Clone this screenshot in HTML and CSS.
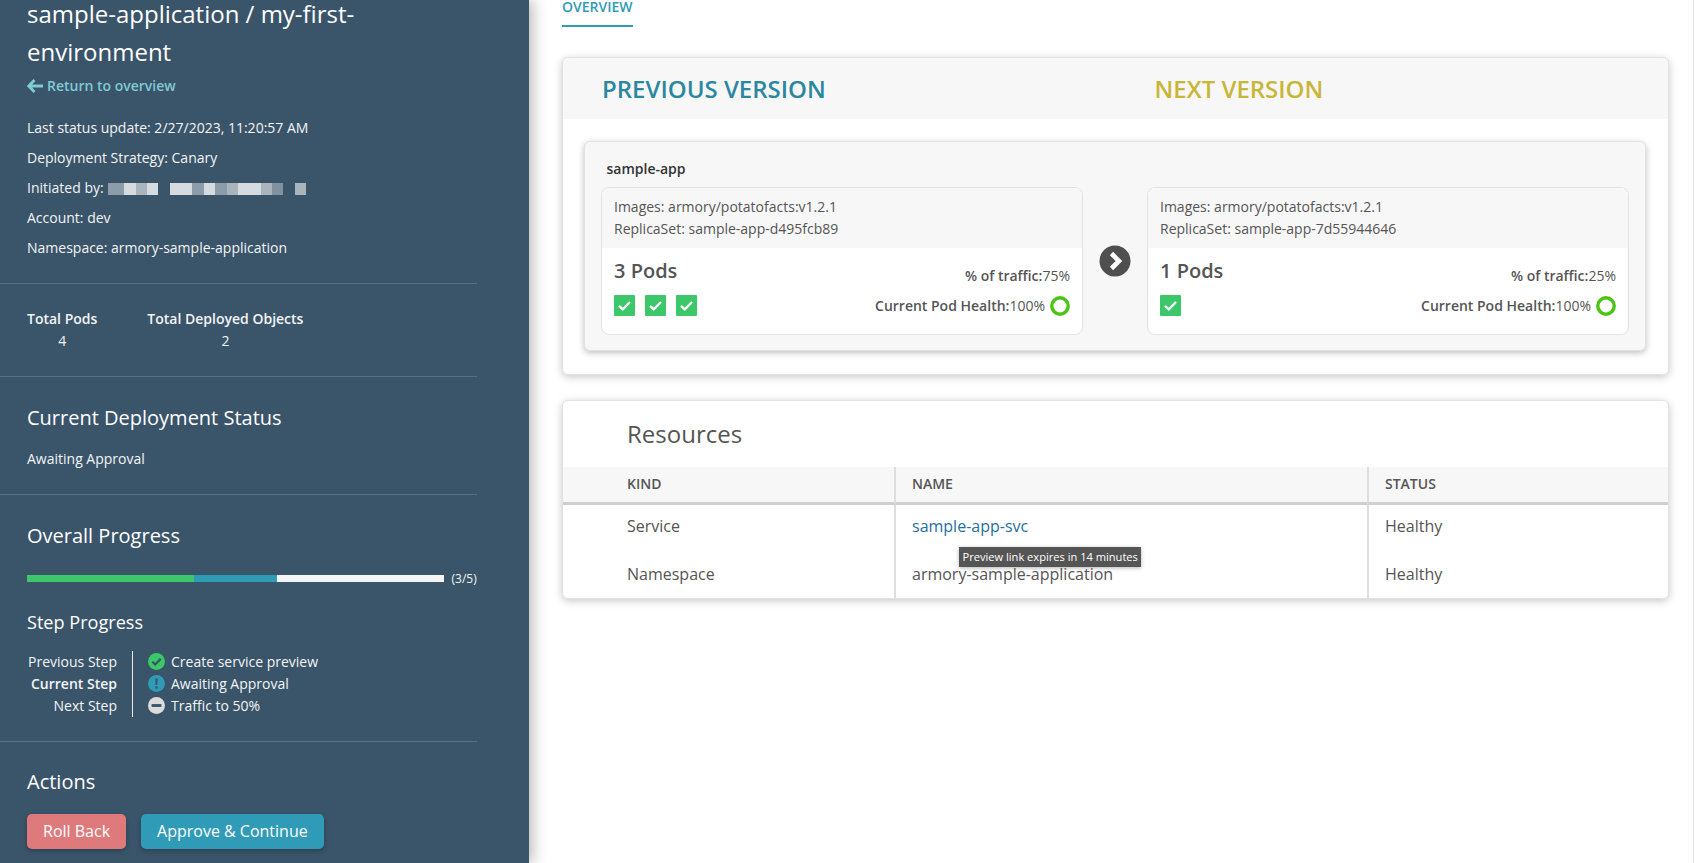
FILE: index.html
```html
<!DOCTYPE html>
<html lang="en">
<head>
<meta charset="utf-8">
<title>sample-application / my-first-environment</title>
<link rel="stylesheet" href="styles.css">
</head>
<body>
<div class="page">
  <aside class="sidebar">
    <section class="sec sec-head">
      <h1 class="title"><span class="title-line">sample-application / my-first-</span><span class="title-line">environment</span></h1>
      <a class="back"><svg class="back-ico" viewBox="0 0 16 14"><path d="M7.500 1 1.800 7 7.500 13M2 7h14" fill="none" stroke="#7fcbd3" stroke-width="2.800"/></svg>Return to overview</a>
      <div class="meta first">Last status update: 2/27/2023, 11:20:57 AM</div>
      <div class="meta">Deployment Strategy: Canary</div>
      <div class="meta init">Initiated by: <span class="pix"><i class="b2 w"></i><i class="b4"></i><i class="b3"></i><i class="b4"></i><i class="gap"></i><i class="b4 w2"></i><i class="b2"></i><i class="b4"></i><i class="b2"></i><i class="b3"></i><i class="b4"></i><i class="b4"></i><i class="b3"></i><i class="b1"></i><i class="gap"></i><i class="b3"></i></span></div>
      <div class="meta">Account: dev</div>
      <div class="meta">Namespace: armory-sample-application</div>
    </section>
    <section class="sec sec-totals">
      <div class="total"><div class="total-k">Total Pods</div><div class="total-v">4</div></div>
      <div class="total"><div class="total-k">Total Deployed Objects</div><div class="total-v">2</div></div>
    </section>
    <section class="sec sec-status">
      <h2 class="h2">Current Deployment Status</h2>
      <div class="status-text">Awaiting Approval</div>
    </section>
    <section class="sec sec-progress">
      <h2 class="h2">Overall Progress</h2>
      <div class="bar-row">
        <div class="bar"><div class="bar-g"></div><div class="bar-b"></div></div>
        <span class="bar-label">(3/5)</span>
      </div>
      <h3 class="h3">Step Progress</h3>
      <div class="steps">
        <div class="step-labels">
          <div>Previous Step</div>
          <div class="cur">Current Step</div>
          <div>Next Step</div>
        </div>
        <div class="step-items">
          <div class="step"><svg class="step-ico" viewBox="0 0 18 18"><circle cx="9" cy="9" r="9" fill="#3cc76a"/><path d="M4.600 9.300 7.600 12.200 13.400 6.200" fill="none" stroke="#3a546a" stroke-width="2.400"/></svg>Create service preview</div>
          <div class="step"><svg class="step-ico" viewBox="0 0 18 18"><circle cx="9" cy="9" r="9" fill="#2f9bb7"/><path d="M7.800 3.600h2.400l-.3 7H8.100zM7.800 12h2.400v2.400H7.800z" fill="#3a546a"/></svg>Awaiting Approval</div>
          <div class="step"><svg class="step-ico" viewBox="0 0 18 18"><circle cx="9" cy="9" r="9" fill="#dcdcdc"/><rect x="3.800" y="7.500" width="10.400" height="3" fill="#3a546a"/></svg>Traffic to 50%</div>
        </div>
      </div>
    </section>
    <section class="sec sec-actions">
      <h2 class="h2">Actions</h2>
      <div class="btns">
        <button class="btn btn-red">Roll Back</button>
        <button class="btn btn-blue">Approve &amp; Continue</button>
      </div>
    </section>
  </aside>
  <main class="main">
    <div class="tabs"><span class="tab">OVERVIEW</span></div>
    <section class="card">
      <div class="card-head">
        <div class="ver ver-prev">PREVIOUS VERSION</div>
        <div class="ver ver-next">NEXT VERSION</div>
      </div>
      <div class="app">
        <div class="app-name">sample-app</div>
        <div class="pods">
          <div class="pod">
            <div class="pod-head">
              <div>Images: armory/potatofacts:v1.2.1</div>
              <div>ReplicaSet: sample-app-d495fcb89</div>
            </div>
            <div class="pod-body">
              <div class="pod-left">
                <div class="pod-count">3 Pods</div>
                <div class="checks">
                  <svg class="chk" viewBox="0 0 21 21"><rect width="21" height="21" rx="1" fill="#3cc76a"/><path d="M5 10.800 8.800 14.400 16 7" fill="none" stroke="#fff" stroke-width="2.300"/></svg>
                  <svg class="chk" viewBox="0 0 21 21"><rect width="21" height="21" rx="1" fill="#3cc76a"/><path d="M5 10.800 8.800 14.400 16 7" fill="none" stroke="#fff" stroke-width="2.300"/></svg>
                  <svg class="chk" viewBox="0 0 21 21"><rect width="21" height="21" rx="1" fill="#3cc76a"/><path d="M5 10.800 8.800 14.400 16 7" fill="none" stroke="#fff" stroke-width="2.300"/></svg>
                </div>
              </div>
              <div class="pod-right">
                <div class="traffic"><b>% of traffic:</b>75%</div>
                <div class="health"><b>Current Pod Health:</b>100%<svg class="ring" viewBox="0 0 20 20"><circle cx="10" cy="10" r="8.200" fill="none" stroke="#4cc414" stroke-width="3.400"/></svg></div>
              </div>
            </div>
          </div>
          <div class="arrow"><svg class="arrow-ico" viewBox="0 0 32 32"><circle cx="16" cy="16" r="15.500" fill="#4f4f4f"/><path d="M12.500 8.500 20 16 12.500 23.500" fill="none" stroke="#fff" stroke-width="4.600"/></svg></div>
          <div class="pod">
            <div class="pod-head">
              <div>Images: armory/potatofacts:v1.2.1</div>
              <div>ReplicaSet: sample-app-7d55944646</div>
            </div>
            <div class="pod-body">
              <div class="pod-left">
                <div class="pod-count">1 Pods</div>
                <div class="checks">
                  <svg class="chk" viewBox="0 0 21 21"><rect width="21" height="21" rx="1" fill="#3cc76a"/><path d="M5 10.800 8.800 14.400 16 7" fill="none" stroke="#fff" stroke-width="2.300"/></svg>
                </div>
              </div>
              <div class="pod-right">
                <div class="traffic"><b>% of traffic:</b>25%</div>
                <div class="health"><b>Current Pod Health:</b>100%<svg class="ring" viewBox="0 0 20 20"><circle cx="10" cy="10" r="8.200" fill="none" stroke="#4cc414" stroke-width="3.400"/></svg></div>
              </div>
            </div>
          </div>
        </div>
      </div>
    </section>
    <section class="card res">
      <h2 class="res-title">Resources</h2>
      <div class="table">
        <div class="th c1">KIND</div><div class="th c2">NAME</div><div class="th c3">STATUS</div>
        <div class="td r1 c1">Service</div><div class="td r1 c2"><a class="link">sample-app-svc</a></div><div class="td r1 c3">Healthy</div>
        <div class="td r2 c1">Namespace</div><div class="td r2 c2">armory-sample-application</div><div class="td r2 c3">Healthy</div>
      </div>
      <div class="tooltip">Preview link expires in 14 minutes</div>
    </section>
  </main>
</div>
</body>
</html>
```
FILE: styles.css
```css
* { box-sizing: border-box; }
html, body { margin: 0; height: 100%; overflow: hidden; background: #fff; }
body { font-family: "Open Sans", "Noto Sans", sans-serif; color: #555; }
.page { display: flex; height: 863px; overflow: hidden; }

.sidebar { width: 529px; flex: none; height: 863px; background: #3a546a; color: #f2f4f5; padding-right: 52px; box-shadow: 3px 0 14px rgba(0,0,0,.3); position: relative; z-index: 1; overflow: hidden; }
.sec { padding-left: 27px; border-bottom: 1px solid #58707f; }
.sec-head { padding-top: 1px; padding-bottom: 25px; }
.title { margin: 0; font-size: 24px; font-weight: 400; color: #fff; }
.title-line { display: block; line-height: 26px; }
.title-line + .title-line { margin-top: 12px; }
.back { display: flex; align-items: center; margin-top: 9.500px; height: 22px; font-size: 14px; font-weight: 600; color: #7fcbd3; }
.back-ico { width: 16px; height: 14px; margin-right: 4px; }
.meta { font-size: 14px; line-height: 20px; margin-top: 10.100px; }
.meta.first { margin-top: 21px; }
.pix { display: inline-flex; vertical-align: -2px; margin-left: 1px; }
.pix i { display: block; width: 11.400px; height: 12px; }
.pix .w { width: 16px; }
.pix .w2 { width: 22.500px; }
.pix .gap { background: transparent; }
.b1 { background: #8091a0; }
.b2 { background: #8d9ca9; }
.b3 { background: #a9b4bd; }
.b4 { background: #d6dbdf; }

.sec-totals { display: flex; padding-top: 25px; padding-bottom: 25px; }
.total { margin-right: 50px; text-align: center; }
.total-k { font-size: 14px; font-weight: 600; line-height: 20px; }
.total-v { font-size: 14px; line-height: 20px; margin-top: 2px; }

.h2 { margin: 0; font-size: 20px; line-height: 28px; font-weight: 400; color: #fff; }
.sec-status { padding-top: 27px; padding-bottom: 25px; }
.status-text { font-size: 14px; line-height: 20px; margin-top: 17px; }

.sec-progress { padding-top: 27px; padding-bottom: 24px; }
.bar-row { display: flex; align-items: center; margin-top: 25px; height: 7px; }
.bar { width: 417px; height: 7px; background: #f5f5f5; display: flex; }
.bar-g { width: 167px; background: #3cc76a; }
.bar-b { width: 83px; background: #2f9bb7; }
.bar-label { margin-left: 7.500px; font-size: 12px; }
.h3 { margin: 26px 0 0; font-size: 18.100px; line-height: 28px; font-weight: 400; color: #fff; }
.steps { display: flex; margin-top: 15px; }
.step-labels { width: 90px; text-align: right; font-size: 14px; line-height: 22px; margin-right: 15px; white-space: nowrap; }
.step-labels .cur { font-weight: 600; }
.step-items { border-left: 1px solid #e8eaec; padding-left: 15px; font-size: 14px; line-height: 22px; }
.step { display: flex; align-items: center; white-space: nowrap; }
.step-ico { width: 17px; height: 17px; margin-right: 6px; }

.sec-actions { border-bottom: 0; padding-top: 26px; }
.btns { display: flex; margin-top: 18px; gap: 14.500px; }
.btn { border: 0; border-radius: 5px; height: 35px; font-family: inherit; font-size: 16px; color: #fff; padding: 0 16px; box-shadow: 0 2px 5px rgba(0,0,0,.25); }
.btn-red { background: #de7a7c; }
.btn-blue { background: #2f9bb7; padding: 0 16.500px; }

.main { flex: 1; min-width: 0; padding: 0 24px 0 33px; border-right: 1px solid #e4e4e4; position: relative; }
.tabs { display: flex; height: 57px; align-items: flex-start; }
.tab { display: block; height: 26.500px; font-size: 14px; font-weight: 600; line-height: 13px; color: #2f9bb7; border-bottom: 2px solid #2f9bb7; }

.card { background: #fff; border: 1px solid #e2e2e2; border-radius: 6px; box-shadow: 0 2px 8px rgba(0,0,0,.22); position: relative; }
.card-head { display: flex; height: 61px; background: #f7f7f7; border-radius: 6px 6px 0 0; }
.ver { width: 50%; padding-left: 39px; font-size: 24px; line-height: 61px; font-weight: 600; }
.ver-prev { color: #2a87a0; }
.ver-next { color: #c9b637; }
.app { margin: 22px 22.500px 23px 20.500px; height: 210px; background: #f7f7f7; border: 1px solid #e2e2e2; border-radius: 6px; box-shadow: 0 2px 6px rgba(0,0,0,.25); padding: 17px 14px 0 16px; }
.app-name { font-size: 14px; font-weight: 600; line-height: 20px; color: #333; padding-left: 6px; }
.pods { display: flex; margin-top: 8px; }
.pod { width: 482px; height: 148px; flex: none; background: #fff; border: 1px solid #e2e2e2; border-radius: 8px; overflow: hidden; }
.pod-head { height: 60px; background: #f7f7f7; padding: 7.500px 11.500px 0 12.500px; font-size: 14px; line-height: 22.500px; color: #555; }
.pod-body { display: flex; justify-content: space-between; padding: 0 11.500px 0 12.500px; }
.pod-count { font-size: 20px; font-weight: 600; line-height: 28px; margin-top: 9px; color: #555; }
.checks { display: flex; gap: 10px; margin-top: 10px; }
.chk { width: 21px; height: 21px; }
.pod-right { text-align: right; font-size: 14px; line-height: 20px; padding-top: 18px; }
.pod-right b { font-weight: 600; }
.traffic { height: 20px; }
.health { display: flex; justify-content: flex-end; align-items: center; margin-top: 9.500px; height: 20px; white-space: pre; }
.ring { width: 20px; height: 20px; margin-left: 5px; }
.arrow { flex: none; width: 64px; display: flex; justify-content: center; padding-top: 58px; }
.arrow-ico { width: 32px; height: 32px; }

.res { margin-top: 25px; height: 198.500px; }
.res-title { margin: 0; padding-left: 64px; font-size: 24px; line-height: 36px; font-weight: 400; height: 66px; padding-top: 15px; color: #555; }
.table { display: grid; grid-template-columns: 331px 473px 1fr; font-size: 16px; }
.th { height: 38px; background: #f7f7f7; border-bottom: 3px solid #cfcfcf; font-size: 14px; font-weight: 600; line-height: 33px; }
.td { line-height: 22px; }
.c1 { padding-left: 64px; }
.c2, .c3 { padding-left: 16px; border-left: 2px solid #dedede; }
.r1 { padding-top: 10px; padding-bottom: 12px; }
.r2 { padding-top: 14px; padding-bottom: 12.500px; }
.link { color: #1f6f9f; }
.tooltip { position: absolute; left: 396px; top: 146px; height: 20px; padding: 0 3.500px; background: #555; color: #fff; font-size: 11.100px; line-height: 19px; white-space: nowrap; box-shadow: 0 1px 4px rgba(0,0,0,.3); }
```
